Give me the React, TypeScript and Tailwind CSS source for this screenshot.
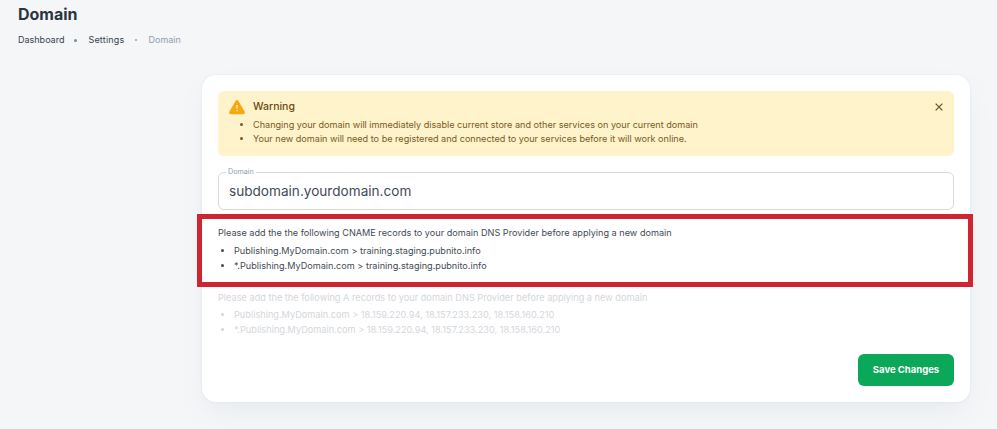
export default function App() {
  return (
    <div className="relative min-h-[429px] bg-[#f4f6f8] font-['Inter',sans-serif] text-[#212b36] overflow-hidden">
      <div className="pl-[18px] pt-[4px]">
        <h1 className="text-[16px] leading-[20px] font-bold text-[#2a3540]">Domain</h1>
        <nav className="mt-[9px] flex items-center text-[9px] leading-[14px] text-[#37424d]">
          <span>Dashboard</span>
          <span className="ml-[10px] mr-[11px] w-[3px] h-[3px] rounded-full bg-[#7c8995]" />
          <span className="tracking-[0.2px]">Settings</span>
          <span className="mx-[11px] w-[2px] h-[2px] rounded-full bg-[#919eab]" />
          <span className="text-[#919eab]">Domain</span>
        </nav>
      </div>

      <div className="ml-[202px] mt-[28px] w-[768px] h-[327px] bg-white rounded-[14px] shadow-[0_0_2px_rgba(145,158,171,0.2),0_12px_24px_-4px_rgba(145,158,171,0.12)] p-4 flex flex-col">
        <div className="h-[65px] rounded-[6px] bg-[#fff3cb] flex pl-[10px] pr-[10px] pt-[9px] text-[#7a5a1f]">
          <svg width="18" height="18" viewBox="0 0 24 24" className="mt-[-2px] shrink-0">
            <path fill="#f5a90f" d="M10.3 3.6 1.9 18a2.4 2.4 0 0 0 2 3.6h16.2a2.4 2.4 0 0 0 2-3.6L13.7 3.6a2 2 0 0 0-3.4 0Z" />
            <rect x="11.2" y="9" width="1.6" height="5.5" rx=".8" fill="#fff3cc" />
            <circle cx="12" cy="17" r="1" fill="#fff3cc" />
          </svg>
          <div className="ml-[7px] flex-1">
            <div className="text-[10.5px] leading-[14px] font-medium text-[#6b4a12]">Warning</div>
            <ul className="list-disc mt-[4px] text-[9.1px] leading-[14px]">
              <li>Changing your domain will immediately disable current store and other services on your current domain</li>
              <li>Your new domain will need to be registered and connected to your services before it will work online.</li>
            </ul>
          </div>
          <svg width="10" height="10" viewBox="0 0 12 12" className="mt-[2px] shrink-0" fill="none" stroke="#6b5326" strokeWidth="1.5">
            <path d="M2 2l8 8M10 2l-8 8" />
          </svg>
        </div>

        <fieldset className="mt-[12px] h-[42px] rounded-[6px] border border-[#d5dae0] px-[7px] pb-0 m-0 min-w-0">
          <legend className="text-[7.2px] leading-[8px] text-[#919eab] px-[2px]">Domain</legend>
          <div className="pl-[3px] pt-[5px] text-[13.6px] leading-[20px] text-[#3f4a55]">subdomain.yourdomain.com</div>
        </fieldset>

        <section className="mt-[15px] text-[9.15px] leading-[15px] text-[#3f4a55]">
          <p>Please add the the following CNAME records to your domain DNS Provider before applying a new domain</p>
          <ul className="mt-[3px] list-disc pl-[16px]">
            <li>Publishing.MyDomain.com &gt; training.staging.pubnito.info</li>
            <li>*.Publishing.MyDomain.com &gt; training.staging.pubnito.info</li>
          </ul>
        </section>

        <section className="mt-[17px] text-[9.2px] leading-[15px] text-[#d3d7dc]">
          <p>Please add the the following A records to your domain DNS Provider before applying a new domain</p>
          <ul className="mt-[2px] list-disc pl-[16px]">
            <li>Publishing.MyDomain.com &gt; 18.159.220.94, 18.157.233.230, 18.158.160.210</li>
            <li>*.Publishing.MyDomain.com &gt; 18.159.220.94, 18.157.233.230, 18.158.160.210</li>
          </ul>
        </section>

        <div className="mt-auto flex justify-end">
          <button className="w-[96px] h-[32px] rounded-[6px] bg-[#0ba85a] text-white text-[9.5px] font-bold">Save Changes</button>
        </div>
      </div>

      <div className="absolute left-[197px] top-[214px] w-[776px] h-[73px] border-[5px] border-[#cf2530] pointer-events-none" />
    </div>
  );
}
